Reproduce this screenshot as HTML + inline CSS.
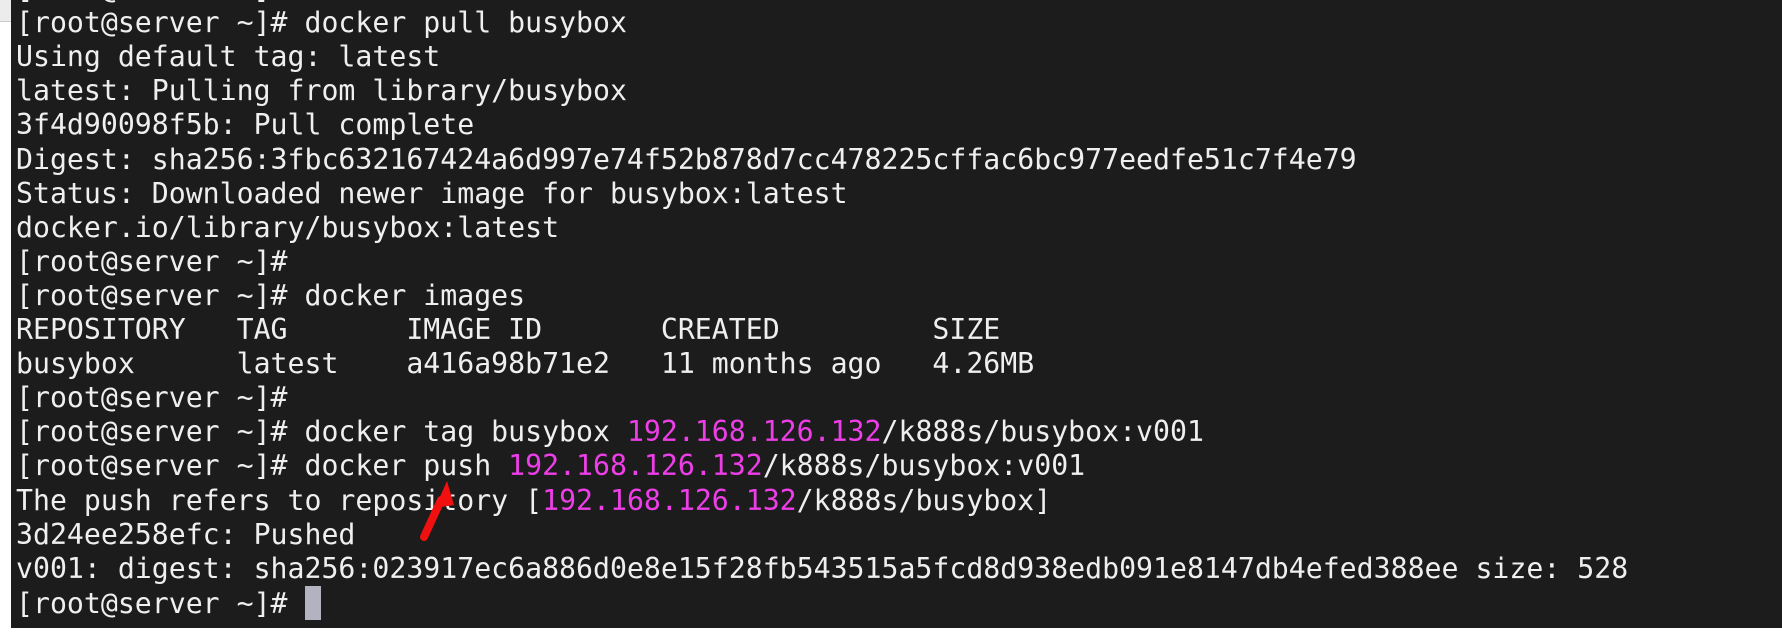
<!DOCTYPE html>
<html><head><style>
html,body{margin:0;padding:0;width:1782px;height:632px;overflow:hidden;background:#fff;}
.strip{position:absolute;left:0;top:0;width:11px;height:21px;background:#ececec;border-bottom:1px solid #ccc;}
.term{position:absolute;left:11px;top:0;width:1771px;height:628px;background:#1c1c1c;overflow:hidden;}
pre{position:absolute;left:5px;top:-27.9px;margin:0;font-family:"DejaVu Sans Mono","Liberation Mono",monospace;font-size:28.2px;line-height:34.1px;color:#efefef;}
.m{color:#ee3ee8;}
.cur{display:inline-block;width:16px;height:34px;background:#b3b2c0;vertical-align:-7px;}
</style></head><body>
<div class="strip"></div>
<div class="term">
<pre>[root@server ~]#
[root@server ~]# docker pull busybox
Using default tag: latest
latest: Pulling from library/busybox
3f4d90098f5b: Pull complete
Digest: sha256:3fbc632167424a6d997e74f52b878d7cc478225cffac6bc977eedfe51c7f4e79
Status: Downloaded newer image for busybox:latest
docker.io/library/busybox:latest
[root@server ~]#
[root@server ~]# docker images
REPOSITORY   TAG       IMAGE ID       CREATED         SIZE
busybox      latest    a416a98b71e2   11 months ago   4.26MB
[root@server ~]#
[root@server ~]# docker tag busybox <span class="m">192.168.126.132</span>/k888s/busybox:v001
[root@server ~]# docker push <span class="m">192.168.126.132</span>/k888s/busybox:v001
The push refers to repository [<span class="m">192.168.126.132</span>/k888s/busybox]
3d24ee258efc: Pushed
v001: digest: sha256:023917ec6a886d0e8e15f28fb543515a5fcd8d938edb091e8147db4efed388ee size: 528
[root@server ~]# <span class="cur"></span></pre>
</div>
<svg style="position:absolute;left:0;top:0" width="1782" height="632">
<line x1="424" y1="537" x2="441" y2="500" stroke="#f01010" stroke-width="8" stroke-linecap="round"/>
<polygon points="447,481 435,508 454,505" fill="#f01010"/>
</svg>
</body></html>
